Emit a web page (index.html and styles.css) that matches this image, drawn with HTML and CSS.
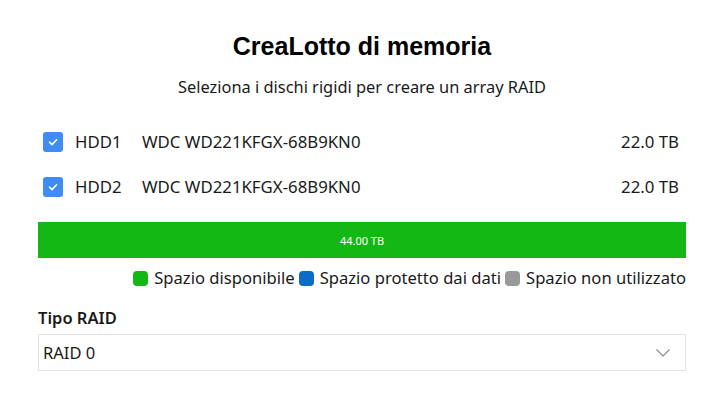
FILE: index.html
```html
<!DOCTYPE html>
<html lang="it">
<head>
<meta charset="utf-8">
<link rel="stylesheet" href="styles.css">
</head>
<body>
<div class="page">
  <h1 class="title">CreaLotto di memoria</h1>
  <p class="subtitle">Seleziona i dischi rigidi per creare un array RAID</p>
  <div class="disks">
    <div class="disk">
      <span class="check"><svg viewBox="0 0 20 20" width="20" height="20"><path d="M6.5 10.2 L9 12.6 L13.6 7.8" fill="none" stroke="#fff" stroke-width="1.6" stroke-linecap="round" stroke-linejoin="round"/></svg></span>
      <span class="name">HDD1</span>
      <span class="model">WDC WD221KFGX-68B9KN0</span>
      <span class="size">22.0 TB</span>
    </div>
    <div class="disk">
      <span class="check"><svg viewBox="0 0 20 20" width="20" height="20"><path d="M6.5 10.2 L9 12.6 L13.6 7.8" fill="none" stroke="#fff" stroke-width="1.6" stroke-linecap="round" stroke-linejoin="round"/></svg></span>
      <span class="name">HDD2</span>
      <span class="model">WDC WD221KFGX-68B9KN0</span>
      <span class="size">22.0 TB</span>
    </div>
  </div>
  <div class="bar">44.00 TB</div>
  <div class="legend">
    <span class="item"><span class="sw green"></span>Spazio disponibile</span>
    <span class="item"><span class="sw blue"></span>Spazio protetto dai dati</span>
    <span class="item"><span class="sw grey"></span>Spazio non utilizzato</span>
  </div>
  <div class="label">Tipo RAID</div>
  <div class="select">
    <span>RAID 0</span>
    <svg class="chev" viewBox="0 0 16 10" width="16" height="10"><path d="M1.5 1.5 L8 8 L14.5 1.5" fill="none" stroke="#8a8a8a" stroke-width="1.1"/></svg>
  </div>
</div>
</body>
</html>
```
FILE: styles.css
```css
html, body {
  margin: 0;
  padding: 0;
  background: #fff;
}
body {
  font-family: "Noto Sans", "Open Sans", sans-serif;
  color: #1a1a1a;
}
.page {
  padding: 30px 34px 0 38px;
  display: flex;
  flex-direction: column;
}
.title {
  margin: 0;
  text-align: center;
  font-family: "Liberation Sans", Arial, sans-serif;
  font-weight: bold;
  font-size: 25px;
  line-height: 32px;
  color: #000;
}
.subtitle {
  margin: 13px 0 0;
  text-align: center;
  font-size: 16.4px;
  line-height: 24px;
  color: #1a1a1a;
}
.disks {
  margin-top: 23px;
  display: flex;
  flex-direction: column;
  gap: 6px;
}
.disk {
  display: flex;
  align-items: center;
  height: 39px;
  font-size: 16.8px;
  padding-left: 5px;
  padding-right: 7px;
}
.check {
  width: 20px;
  height: 20px;
  border-radius: 3px;
  background: #3f8cf4;
  display: flex;
  align-items: center;
  justify-content: center;
}
.name {
  margin-left: 12px;
  width: 67px;
}
.model {
  flex: 1;
}
.size {
  text-align: right;
}
.bar {
  margin-top: 16px;
  height: 36px;
  background: #14b814;
  color: #fff;
  font-size: 11px;
  display: flex;
  align-items: center;
  justify-content: center;
}
.legend {
  margin-top: 8px;
  display: flex;
  justify-content: flex-end;
  gap: 4px;
  font-size: 16.6px;
  line-height: 24px;
  color: #1a1a1a;
}
.item {
  display: flex;
  align-items: center;
}
.sw {
  width: 15px;
  height: 15px;
  border-radius: 4px;
  margin-right: 6px;
}
.green { background: #14b814; }
.blue { background: #0a6cc4; }
.grey { background: #999; }
.label {
  margin-top: 16px;
  font-size: 16.5px;
  font-weight: 600;
  line-height: 24px;
  color: #1a1a1a;
}
.select {
  margin-top: 4px;
  height: 37px;
  box-sizing: border-box;
  border: 1px solid #e3e3e3;
  display: flex;
  align-items: center;
  justify-content: space-between;
  padding: 0 14px 0 4px;
  font-size: 16.5px;
}
.chev {
  display: block;
}
```
